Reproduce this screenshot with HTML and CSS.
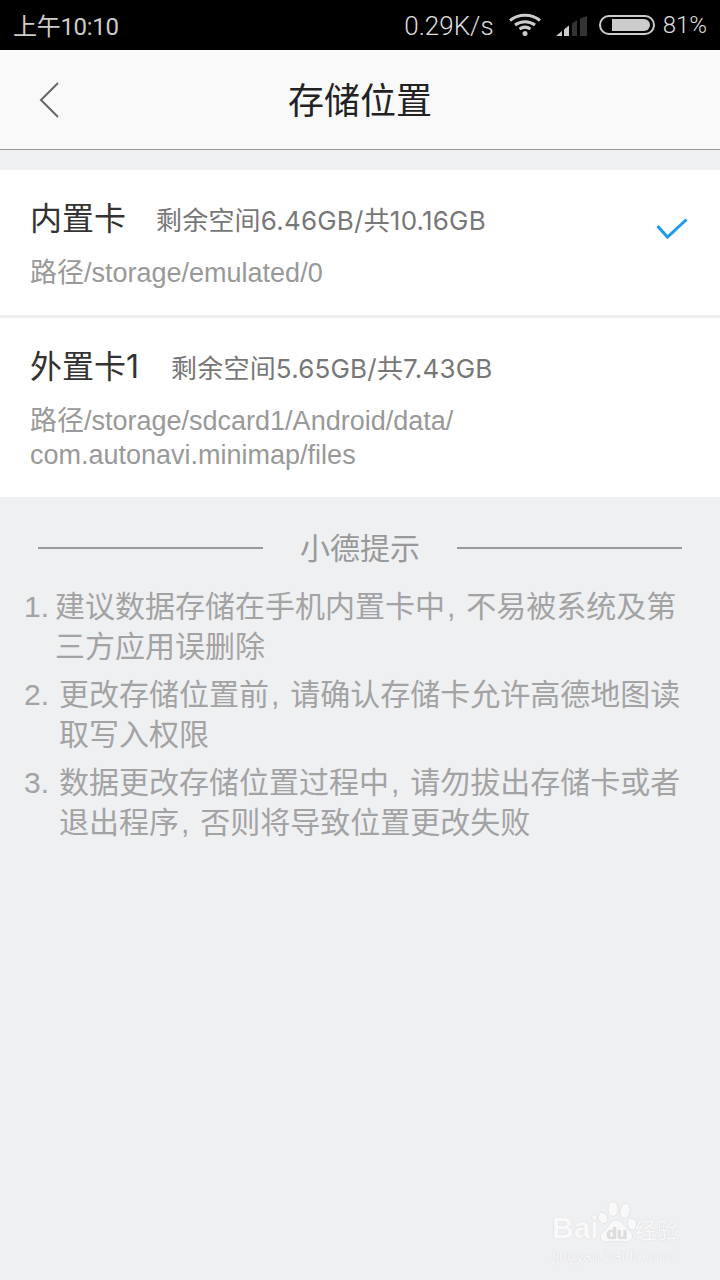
FILE: index.html
```html
<!DOCTYPE html>
<html>
<head>
    <meta charset="UTF-8">
    <title>存储位置</title>
    <link rel="stylesheet" href="styles.css">
</head>
<body>
    <div class="status">
        <span class="time">上午10:10</span>
        <div class="status-right">
            <span class="speed">0.29K/s</span>
            <svg class="wifi" width="32" height="23" viewBox="0 0 32 23">
                <path d="M1 7.500C9 .5 23 .5 31 7.500" fill="none" stroke="#ccc" stroke-width="3"/>
                <path d="M6 12C12 7.500 20 7.500 26 12" fill="none" stroke="#ccc" stroke-width="3"/>
                <path d="M10.500 16C14 13.600 18 13.600 21.500 16" fill="none" stroke="#ccc" stroke-width="3"/>
                <circle cx="16" cy="20.500" r="2.500" fill="#ccc"/>
            </svg>
            <svg class="signal" width="31" height="20" viewBox="0 0 31 20">
                <path d="M0 20L6 15V20Z" fill="#ccc"/>
                <path d="M8 13.500L13 9.500V20H8Z" fill="#ccc"/>
                <path d="M16 7.500L21 4V20H16Z" fill="#333"/>
                <path d="M24 2.500L31 0V20H24Z" fill="#333"/>
            </svg>
            <div class="battery"><i></i></div>
            <span class="pct">81%</span>
        </div>
    </div>

    <div class="nav">
        <svg class="back" width="20" height="36" viewBox="0 0 20 36">
            <path d="M19 1L2 18L19 35" fill="none" stroke="#666" stroke-width="2"/>
        </svg>
        <h1>存储位置</h1>
    </div>

    <ul class="cards">
        <li class="card first">
            <div class="card-info">
                <div class="card-head"><b>内置卡</b><span>剩余空间6.46GB/共10.16GB</span></div>
                <p>路径/storage/emulated/0</p>
            </div>
            <svg class="check" width="32" height="22" viewBox="0 0 32 22">
                <path d="M1.500 8L11.500 19L30.500 1.500" fill="none" stroke="#1e9bf0" stroke-width="3"/>
            </svg>
        </li>
        <li class="card second">
            <div class="card-info">
                <div class="card-head"><b>外置卡1</b><span>剩余空间5.65GB/共7.43GB</span></div>
                <p>路径/storage/sdcard1/Android/data/<br>com.autonavi.minimap/files</p>
            </div>
        </li>
    </ul>

    <div class="tips">
        <div class="tips-title"><i></i><span>小德提示</span><i></i></div>
        <ol>
            <li class="tip-one"><em>1.</em><span>建议数据存储在手机内置卡中<u>,</u>不易被系统及第三方应用误删除</span></li>
            <li><em>2.</em><span>更改存储位置前<u>,</u>请确认存储卡允许高德地图读取写入权限</span></li>
            <li><em>3.</em><span>数据更改存储位置过程中<u>,</u>请勿拔出存储卡或者退出程序<u>,</u>否则将导致位置更改失败</span></li>
        </ol>
    </div>

    <div class="mark">
        <div class="mark-logo">
            <span class="mark-bai">Bai</span>
            <svg class="mark-paw" width="40" height="50" viewBox="0 0 40 50">
                <g fill="#f9f9fa" stroke="#dcdcde" stroke-width=".6">
                    <ellipse cx="6" cy="18" rx="4.500" ry="6" transform="rotate(-30 6 18)"/>
                    <ellipse cx="16" cy="9" rx="5" ry="7.500"/>
                    <ellipse cx="28" cy="11" rx="5" ry="7.500" transform="rotate(10 28 11)"/>
                    <ellipse cx="35" cy="24" rx="4.500" ry="6" transform="rotate(-15 35 24)"/>
                    <path d="M19 20C25 20 27 27 33 31C38 35 35 43 28 42C23 41 15 41 10 42C3 43 1 36 6 32C12 28 13 20 19 20Z"/>
                </g>
                <text x="20" y="39" text-anchor="middle" font-family="Liberation Sans" font-size="17" font-weight="700" fill="#dedee0">du</text>
            </svg>
            <span class="mark-cn">经验</span>
        </div>
        <div class="mark-url">jingyan.baidu.com</div>
    </div>
</body>
</html>
```

FILE: styles.css
```css
*{margin: 0;padding: 0;list-style: none;box-sizing: border-box;}
html,body{
    width: 720px;
    height: 1280px;
    overflow: hidden;
}
body{
    position: relative;
    background-color: #eff0f2;
    font-family: "Liberation Sans", "Noto Sans CJK SC", sans-serif;
}
.status{
    height: 50px;
    background-color: #000;
    color: #ddd;
    font-family: "Roboto", "Noto Sans CJK SC", sans-serif;
    font-weight: 300;
    padding: 0 13px;
    display: flex;
    justify-content: space-between;
    align-items: center;
}
.time{
    font-size: 24px;
    font-weight: 400;
    color: #ccc;
    letter-spacing: -.3px;
    margin-top: -2px;
}
.status-right{
    display: flex;
    align-items: center;
    font-size: 26px;
}
.speed{
    margin-top: 2px;
}
.pct{
    font-size: 24px;
}
.wifi{
    margin-left: 15px;
    margin-bottom: 2px;
}
.signal{
    margin-left: 15px;
    margin-bottom: -1px;
}
.battery{
    width: 56px;
    height: 20px;
    margin-left: 12px;
    margin-right: 8px;
    border: 2px solid #ccc;
    border-radius: 10px;
    padding: 2px 3px 2px 11px;
}
.battery i{
    display: block;
    height: 100%;
    background-color: #ccc;
    border-radius: 0 6px 6px 0;
}
.nav{
    height: 100px;
    padding-bottom: 4px;
    background-color: #f9f9f9;
    border-bottom: 1px solid #999;
    display: flex;
    align-items: center;
    justify-content: center;
    position: relative;
}
.nav h1{
    font-size: 36px;
    font-weight: 400;
    color: #222;
}
.back{
    position: absolute;
    left: 39px;
    top: 32px;
}
.cards{
    margin-top: 20px;
}
.card{
    background-color: #fff;
    display: flex;
    justify-content: space-between;
    align-items: center;
    padding: 0 32px 3px 30px;
}
.first{
    height: 145px;
}
.second{
    height: 179px;
    margin-top: 3px;
}
.card-info{
    flex: 1;
}
.card-head{
    display: flex;
    align-items: baseline;
    color: #333;
    font-family: "Inter", "Noto Sans CJK SC", sans-serif;
}
.card-head b{
    font-weight: 400;
    font-size: 32px;
    margin-right: 30px;
}
.second .card-head b{
    margin-right: 32px;
}
.card-head span{
    font-size: 26px;
    letter-spacing: .2px;
    color: #777;
}
.card p{
    font-size: 27px;
    line-height: 34px;
    color: #999;
    margin-top: 17px;
}
.check{
    margin-bottom: 24px;
}
.tips{
    padding: 27px 36px 0 24px;
}
.tips-title{
    display: flex;
    align-items: center;
    font-size: 30px;
    color: #999;
    margin: 0 2px 0 14px;
}
.tips-title i{
    flex: 1;
    height: 2px;
    margin-top: 4px;
    background-color: #999;
}
.tips-title span{
    margin: 0 37px;
}
.tips ol{
    margin-top: 19px;
}
.tips li{
    display: flex;
    align-items: baseline;
    font-size: 30px;
    line-height: 40px;
    color: #a3a3a3;
    margin-bottom: 8px;
}
.tips em{
    flex: none;
    width: 35px;
    font-style: normal;
}
.tips .tip-one em{
    width: 31px;
}
.tips u{
    text-decoration: none;
    margin: 0 11px 0 2px;
}
.mark{
    position: absolute;
    left: 552px;
    top: 1200px;
    color: #f9f9fa;
    font-family: "Liberation Sans", "Noto Sans CJK SC", sans-serif;
    text-shadow: 0 0 1px #c8c8cc;
}
.mark-logo{
    display: flex;
    align-items: flex-end;
    height: 46px;
}
.mark-bai{
    font-size: 30px;
    font-weight: 700;
    line-height: 36px;
}
.mark-paw{
    margin-left: -2px;
    margin-bottom: -4px;
}
.mark-cn{
    font-size: 22px;
    line-height: 30px;
    margin-left: -2px;
}
.mark-url{
    font-size: 15px;
    line-height: 20px;
    letter-spacing: .1px;
    white-space: nowrap;
}
```
